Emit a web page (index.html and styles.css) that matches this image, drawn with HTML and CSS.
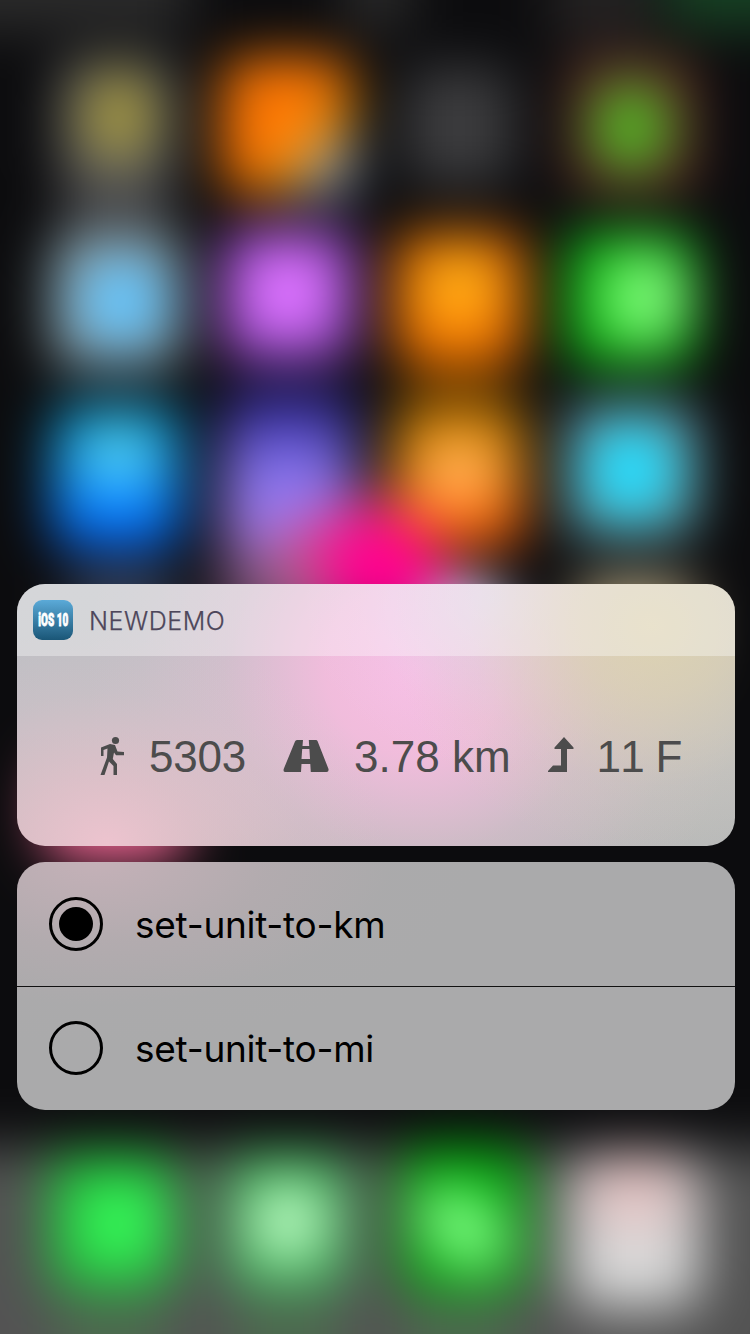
FILE: index.html
```html
<!DOCTYPE html>
<html lang="en">
<head>
<meta charset="utf-8">
<title>Newdemo notification</title>
<link rel="stylesheet" href="styles.css">
</head>
<body>
<div class="screen">
  <svg class="wallpaper" viewBox="0 0 750 1334" aria-hidden="true">
    <defs>
      <filter id="soft" filterUnits="userSpaceOnUse" x="-150" y="-150" width="1050" height="1634" color-interpolation-filters="sRGB"><feGaussianBlur stdDeviation="27"/></filter>
      <linearGradient id="sky" x1="0" y1="0" x2="0" y2="1"><stop offset="0" stop-color="#0b93bb"/><stop offset=".5" stop-color="#109aff"/><stop offset="1" stop-color="#0060ff"/></linearGradient>
      <linearGradient id="amber" x1="0" y1="0" x2="0" y2="1"><stop offset="0" stop-color="#d08a00"/><stop offset=".5" stop-color="#ff9010"/><stop offset="1" stop-color="#fb5008"/></linearGradient>
      <linearGradient id="violet" x1="0" y1="0" x2="0" y2="1"><stop offset="0" stop-color="#1a1680"/><stop offset=".5" stop-color="#8a78f2"/><stop offset="1" stop-color="#a878e0"/></linearGradient>
    </defs>
    <rect width="750" height="1334" fill="#0c0c0e"/>
    <g filter="url(#soft)">
      <rect x="-150" y="-150" width="1050" height="1634" fill="#0c0c0e"/>
      <rect x="-150" y="-150" width="340" height="180" fill="#2b2b2b"/>
      <rect x="345" y="-60" width="65" height="90" fill="#2b2b2b"/>
      <rect x="550" y="-60" width="100" height="100" fill="#242222"/>
      <rect x="665" y="-150" width="200" height="178" fill="#174224"/>
      <rect x="60" y="60" width="114" height="124" rx="20" fill="#646464"/>
      <ellipse cx="119" cy="116" rx="36" ry="44" fill="#a2953c"/>
      <rect x="222" y="58" width="130" height="136" rx="24" fill="#ff7804"/>
      <path d="M352 80V194H256Z" fill="#e09500"/>
      <path d="M352 120V194H286Z" fill="#98a6c0"/>
      <rect x="404" y="68" width="110" height="116" rx="22" fill="#3c3c3e"/>
      <rect x="570" y="58" width="124" height="134" rx="22" fill="#6a3429"/>
      <ellipse cx="631" cy="128" rx="38" ry="44" fill="#4fba24"/>
      <rect x="64" y="185" width="108" height="50" fill="#424244"/>
      <rect x="52" y="236" width="130" height="130" rx="22" fill="#90a8b0"/>
      <ellipse cx="123" cy="302" rx="43" ry="43" fill="#60c4ff"/>
      <rect x="223" y="230" width="130" height="130" rx="22" fill="#aa52de"/>
      <ellipse cx="288" cy="292" rx="42" ry="42" fill="#e076ff"/>
      <rect x="395" y="234" width="128" height="130" rx="22" fill="#ff7800"/>
      <ellipse cx="459" cy="288" rx="40" ry="38" fill="#fbb018"/>
      <rect x="566" y="232" width="130" height="134" rx="22" fill="#14be18"/>
      <ellipse cx="646" cy="298" rx="42" ry="46" fill="#80fa7a"/>
      <rect x="53" y="404" width="128" height="144" rx="22" fill="url(#sky)"/>
      <ellipse cx="118" cy="456" rx="36" ry="32" fill="#58d0f0"/>
      <rect x="224" y="390" width="128" height="166" rx="24" fill="url(#violet)"/>
      <rect x="395" y="406" width="128" height="142" rx="22" fill="url(#amber)"/>
      <ellipse cx="459" cy="473" rx="34" ry="32" fill="#ffb465"/>
      <rect x="405" y="364" width="108" height="44" fill="#4c2c04"/>
      <rect x="568" y="406" width="128" height="130" rx="22" fill="#70acb6"/>
      <ellipse cx="631" cy="471" rx="44" ry="46" fill="#20dcff"/>
      <rect x="70" y="568" width="105" height="90" fill="#343c50"/>
      <path d="M265 550 375 490 485 610H280Z" fill="#ea3a80"/>
      <rect x="220" y="550" width="125" height="90" fill="#9b6a97" opacity=".7"/>
      <ellipse cx="381" cy="572" rx="60" ry="54" fill="#ff0090"/>
      <ellipse cx="467" cy="626" rx="44" ry="46" fill="#d9d7ff"/>
      <rect x="576" y="580" width="120" height="90" rx="20" fill="#b2a37f"/>
      <rect x="44" y="758" width="142" height="103" rx="30" fill="#f86898"/>
      <rect x="-150" y="1148" width="1050" height="336" fill="#535353"/>
      <rect x="49" y="1154" width="128" height="138" rx="22" fill="#20bf3b"/>
      <ellipse cx="119" cy="1224" rx="43" ry="44" fill="#38f65a"/>
      <rect x="226" y="1154" width="124" height="138" rx="22" fill="#3db658"/>
      <ellipse cx="288" cy="1222" rx="40" ry="42" fill="#baf6c0"/>
      <rect x="400" y="1146" width="128" height="148" rx="22" fill="#06ac10"/>
      <ellipse cx="463" cy="1228" rx="50" ry="33" transform="rotate(40 463 1228)" fill="#84ff88"/>
      <rect x="570" y="1158" width="130" height="150" rx="22" fill="#d9d9d9"/>
      <ellipse cx="634" cy="1192" rx="52" ry="38" fill="#e2c2c2"/>
      <path d="M60 1308H168V1380H60ZM234 1308H342V1380H234ZM408 1308H516V1380H408Z" fill="#4c6a4e"/>
    </g>
  </svg>

  <main class="stack">
    <section class="card notice">
      <header class="notice-head">
        <span class="app-icon"><span class="app-icon-text">iOS 10</span></span>
        <span class="app-name">NEWDEMO</span>
      </header>
      <div class="stats">
        <svg class="walk" viewBox="0 0 26 40" aria-hidden="true"><circle cx="16.5" cy="4.5" r="3.6"/><path d="M2 11.5 11 8 16 9 18.5 15.5 25 16V19.2H17L15 16.5 13.8 23 18 28V39H14.5V30L10 25.5 5.5 39H1.5L8 21.5 8.5 12.5 4.5 14V20H2Z"/></svg>
        <span class="value steps">5303</span>
        <svg class="road" viewBox="0 0 46 32" aria-hidden="true"><path fill-rule="evenodd" d="M14 0H20L19.5 6H26.2L25.8 0H33Q34 0 34.5 1L45.5 29Q46 32 43.5 32H27.8L27.3 24H18.5L18 32H2Q0 32 .7 29L12 1.5Q12.5 0 14 0ZM19.2 9 18.5 19H27L26.4 9Z"/></svg>
        <span class="value distance">3.78 km</span>
        <svg class="climb" viewBox="0 0 26 35" aria-hidden="true"><path d="M16 0 25.5 10.5V12H19V35H0V34L5 28.5H13V12H6.5V10.5Z"/></svg>
        <span class="value floors">11 F</span>
      </div>
    </section>

    <section class="card options">
      <div class="option"><span class="radio checked"></span><span class="label">set-unit-to-km</span></div>
      <div class="option"><span class="radio"></span><span class="label">set-unit-to-mi</span></div>
    </section>
  </main>
</div>
</body>
</html>
```
FILE: styles.css
```css
* { box-sizing: border-box; }
body { margin: 0; background: #0c0c0e; }
.screen { position: relative; width: 750px; height: 1334px; overflow: hidden; }
.wallpaper { position: absolute; inset: 0; width: 750px; height: 1334px; }
.stack { position: relative; display: flex; flex-direction: column; gap: 16px; padding: 584px 15px 0 17px; }
.card { border-radius: 28px; overflow: hidden; }

.notice {
  height: 262px;
  background:
    radial-gradient(ellipse 280px 220px at 90px 262px, rgba(240,196,208,.95), rgba(238,194,206,.65) 30%, rgba(232,194,206,.2) 70%, rgba(232,194,206,0)),
    radial-gradient(ellipse 260px 230px at 635px 42px, rgba(222,212,176,.95), rgba(221,210,178,.75) 30%, rgba(218,208,180,.2) 70%, rgba(218,208,180,0)),
    radial-gradient(ellipse 190px 170px at 475px 15px, rgba(222,214,244,.8), rgba(226,210,240,.5) 35%, rgba(226,210,240,.12) 70%, rgba(226,210,240,0)),
    radial-gradient(ellipse 330px 320px at 398px 85px, #fabde4, rgba(249,188,224,.85) 27%, rgba(238,190,218,.36) 58%, rgba(230,192,216,.1) 83%, rgba(230,192,216,0)),
    linear-gradient(180deg, #bfc0c5, #bfbfc3 55%, #b9bab9);
}
.notice-head { display: flex; align-items: center; height: 72px; padding-left: 16px; background: rgba(255,255,255,.35); }
.app-icon {
  display: flex; align-items: center; justify-content: center; width: 40px; height: 40px; border-radius: 9px;
  background: linear-gradient(#5baad8, #1a5677);
}
.app-icon-text {
  flex: none; color: #fff; font: 900 17.5px/1 Roboto, "Liberation Sans", sans-serif; white-space: nowrap;
  -webkit-text-stroke: .8px #fff; transform: translateY(1px) scaleX(.57);
}
.app-name { margin: 2px 0 0 16px; color: #4d465a; font: 300 25px/72px Inter, sans-serif; letter-spacing: .55px; -webkit-text-stroke: .25px #4d465a; }

.stats { display: flex; align-items: flex-start; padding: 80px 0 0 82px; color: #4c4c4c; height: 190px; }
.stats svg { flex: none; fill: currentColor; }
.walk { width: 26px; height: 40px; }
.road { width: 46px; height: 32px; margin: 4px 0 0 37px; }
.climb { width: 26px; height: 35px; margin: 1px 0 0 37px; }
.value { margin-top: -4px; font: 400 44px/50px "Liberation Sans", sans-serif; font-kerning: none; white-space: pre; }
.steps { margin-left: 24px; letter-spacing: -.2px; }
.distance { margin-left: 25px; }
.floors { margin-left: 23px; letter-spacing: -.8px; }

.options {
  height: 248px;
  background:
    radial-gradient(ellipse 380px 190px at 80px -5px, #c5b1b8, rgba(184,172,177,.6) 45%, rgba(174,170,173,.15) 78%, rgba(170,170,171,0)),
    #aaaaab;
}
.option { display: flex; align-items: center; height: 124px; padding-left: 32px; }
.option + .option { box-shadow: inset 0 1px #111; }
.radio { display: flex; align-items: center; justify-content: center; width: 54px; height: 54px; border: 3px solid #000; border-radius: 50%; }
.checked::after { content: ""; width: 34px; height: 34px; border-radius: 50%; background: #000; }
.label { margin: 2px 0 0 32px; color: #000; font: 400 37px/44px Inter, sans-serif; letter-spacing: -.28px; }
```
